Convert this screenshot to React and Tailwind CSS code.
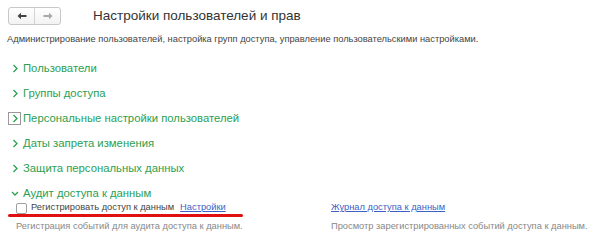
import React from 'react'

const sections = [
    { title: 'Пользователи' },
    { title: 'Группы доступа' },
    { title: 'Персональные настройки пользователей', focused: true },
    { title: 'Даты запрета изменения' },
    { title: 'Защита персональных данных' },
]

function Chevron({ open }) {
    return (
        <svg width="8" height="9" viewBox="0 0 8 9" className="shrink-0">
            {open
                ? <path d="M1 3 L4 6 L7 3" fill="none" stroke="#2b9f52" strokeWidth="1.3" />
                : <path d="M2.5 1 L6 4.5 L2.5 8" fill="none" stroke="#2b9f52" strokeWidth="1.3" />}
        </svg>
    )
}

function App() {
    return (
        <div className="w-[601px] h-[247px] bg-white overflow-hidden text-[#333] font-[family-name:'Liberation_Sans',Arial,sans-serif]">
            <div className="flex items-center h-[27px] pt-[4px] pl-[8px]">
                <div className="flex h-[18px] w-[53px] border border-[#c8c8c8] rounded-[3px] bg-gradient-to-b from-white to-[#f2f2f2]">
                    <div className="flex-1 flex items-center justify-center border-r border-[#d4d4d4]">
                        <svg width="10" height="8" viewBox="0 0 10 8">
                            <path d="M0.5 4 L4 0.8 L4 3 L9.5 3 L9.5 5 L4 5 L4 7.2 Z" fill="#444" />
                        </svg>
                    </div>
                    <div className="flex-1 flex items-center justify-center">
                        <svg width="10" height="8" viewBox="0 0 10 8">
                            <path d="M9.5 4 L6 0.8 L6 3 L0.5 3 L0.5 5 L6 5 L6 7.2 Z" fill="#a8a8a8" />
                        </svg>
                    </div>
                </div>
                <h1 className="ml-[32px] text-[13.5px] leading-[18px] text-[#333]">Настройки пользователей и прав</h1>
            </div>

            <p className="pl-[7px] mt-[5px] text-[9.3px] leading-[14px] text-[#444]">
                Администрирование пользователей, настройка групп доступа, управление пользовательскими настройками.
            </p>

            <div className="mt-[14px] flex flex-col gap-[8px] pl-[8px]">
                {sections.map((s, i) => (
                    <div key={i} className="flex items-center h-[17px] text-[11.3px] text-[#2b9f52]">
                        <span className={`flex items-center justify-center w-[13px] h-[13px] mr-[2px] ${s.focused ? 'border border-[#999]' : ''}`}>
                            <Chevron />
                        </span>
                        <span className="leading-[17px]">{s.title}</span>
                    </div>
                ))}
                <div className="flex items-center h-[17px] text-[11.3px] text-[#2b9f52]">
                    <span className="flex items-center justify-center w-[13px] h-[13px] mr-[2px]">
                        <Chevron open />
                    </span>
                    <span className="leading-[17px]">Аудит доступа к данным</span>
                </div>
            </div>

            <div className="flex mt-[-2px]">
                <div className="w-[331px] pl-[8px]">
                    <div className="relative flex items-center h-[16px] pl-[8px]">
                        <span className="w-[11px] h-[11px] border border-[#a0a0a0] rounded-[2px] bg-white mr-[4px]" />
                        <span className="text-[9.3px] text-[#444]">Регистрировать доступ к данным</span>
                        <span className="ml-[6px] text-[9.3px] text-[#3c5fc8] underline">Настройки</span>
                        <span className="absolute left-0 top-[14px] w-[235px] h-[3px] rounded-full bg-[#e01010]" />
                    </div>
                    <p className="mt-[3px] pl-[8px] text-[9.3px] leading-[14px] text-[#888]">Регистрация событий для аудита доступа к данным.</p>
                </div>
                <div>
                    <div className="flex items-center h-[16px]">
                        <span className="text-[9.3px] text-[#3c5fc8] underline">Журнал доступа к данным</span>
                    </div>
                    <p className="mt-[3px] text-[9.3px] leading-[14px] text-[#888]">Просмотр зарегистрированных событий доступа к данным.</p>
                </div>
            </div>
        </div>
    )
}

export default App
